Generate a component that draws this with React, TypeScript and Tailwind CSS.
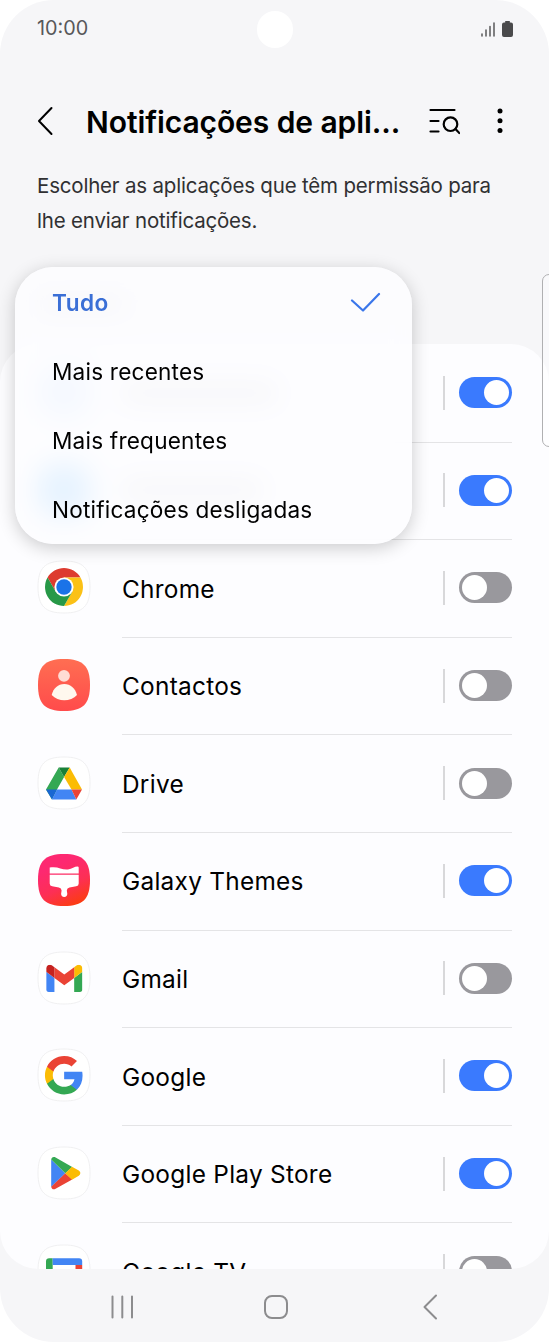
import type { ReactNode } from 'react';

const SQUIRCLE = 'M26 0C45 0 52 7 52 26S45 52 26 52 0 45 0 26 7 0 26 0Z';

function IconBase({ children, fill = '#fff', stroke = '#ececee' }: { children: ReactNode; fill?: string; stroke?: string }) {
  return (
    <svg viewBox="0 0 52 52" className="size-[52px] shrink-0 overflow-visible">
      <path d={SQUIRCLE} fill={fill} stroke={stroke} strokeWidth="0.8" />
      {children}
    </svg>
  );
}

const ChromeIcon = () => (
  <IconBase>
    <path d="M9.55 16.5A19 19 0 0 1 42.45 16.5H26L17.77 30.75Z" fill="#dd3b2f" />
    <path d="M42.45 16.5A19 19 0 0 1 26 45L34.23 30.75L26 16.5Z" fill="#fbc116" />
    <path d="M26 45A19 19 0 0 1 9.55 16.5L17.77 30.75H34.23Z" fill="#279847" />
    <circle cx="26" cy="26" r="9.6" fill="#fff" />
    <circle cx="26" cy="26" r="7.7" fill="#1a73e8" />
  </IconBase>
);

const ContactsIcon = () => (
  <IconBase fill="url(#contacts)" stroke="none">
    <defs>
      <linearGradient id="contacts" x1="0" y1="0" x2="0" y2="1">
        <stop offset="0" stopColor="#ff6e52" />
        <stop offset="1" stopColor="#ff4b4b" />
      </linearGradient>
    </defs>
    <circle cx="26" cy="16.8" r="5.9" fill="#ffdcd4" />
    <path d="M13.7 36C15.5 29 20 25 26.3 25S37 29 39 36C36 39.5 31 41.3 26.3 41.3S17 39.5 13.7 36Z" fill="#fff8ee" />
  </IconBase>
);

const DriveIcon = () => (
  <IconBase>
    <path d="M20.7 10.5L26.1 20L19 32.5L14 42.5L8 32.5Z" fill="#34a853" />
    <path d="M20.7 10.5H31.7L26.1 20Z" fill="#188038" />
    <path d="M31.7 10.5L44 32.5H33.5L26.1 20Z" fill="#fbbc04" />
    <path d="M8 32.5H19L14 42.5Z" fill="#1967d2" />
    <path d="M19 32.5H33.5L38.3 42.5H14Z" fill="#4285f4" />
    <path d="M33.5 32.5H44L38.3 42.5Z" fill="#ea4335" />
  </IconBase>
);

const ThemesIcon = () => (
  <IconBase fill="url(#themes)" stroke="none">
    <defs>
      <linearGradient id="themes" x1="0.3" y1="0" x2="0.75" y2="1">
        <stop offset="0.2" stopColor="#fd2871" />
        <stop offset="0.6" stopColor="#fd2f55" />
        <stop offset="1" stopColor="#fb3d0c" />
      </linearGradient>
    </defs>
    <path d="M11.7 13.6C20 12 24 16.2 30 15.4C34 14.9 36.5 12.6 39.5 12.6Q40.7 12.6 40.7 13.6V19.4H11.7Z" fill="#fff" />
    <path d="M11.7 20.7H40.7V29.5Q40.7 32 38.2 32.2L31.5 33.4Q29 34 28.8 36.5L29.3 39.8A3.1 3.1 0 0 1 23.1 39.8L23.6 36.5Q23.4 34 20.9 33.4L14.2 32.2Q11.7 32 11.7 29.5Z" fill="#fff" />
  </IconBase>
);

const GmailIcon = () => (
  <IconBase>
    <svg x="8.2" y="12.7" width="36.2" height="27.2" viewBox="52 42 88 66">
      <path fill="#4285f4" d="M58 108h14V74L52 59v43c0 3.32 2.69 6 6 6" />
      <path fill="#34a853" d="M120 108h14c3.32 0 6-2.69 6-6V59l-20 15" />
      <path fill="#fbbc04" d="M120 48v26l20-15v-8c0-7.42-8.47-11.65-14.4-7.2" />
      <path fill="#ea4335" d="M72 74V48l24 18 24-18v26L96 92" />
      <path fill="#c5221f" d="M52 51v8l20 15V48l-5.6-4.2c-5.94-4.45-14.4-.22-14.4 7.2" />
    </svg>
  </IconBase>
);

const GoogleIcon = () => (
  <IconBase>
    <g transform="translate(5.2 5.3) scale(1.745)">
      <path fill="#4285f4" d="M22.56 12.25c0-.78-.07-1.53-.2-2.25H12v4.26h5.92c-.26 1.37-1.04 2.53-2.21 3.31v2.77h3.57c2.08-1.92 3.28-4.74 3.28-8.09z" />
      <path fill="#34a853" d="M12 23c2.97 0 5.46-.98 7.28-2.66l-3.57-2.77c-.98.66-2.23 1.06-3.71 1.06-2.86 0-5.29-1.93-6.16-4.53H2.18v2.84C3.99 20.53 7.7 23 12 23z" />
      <path fill="#fbbc05" d="M5.84 14.09c-.22-.66-.35-1.36-.35-2.09s.13-1.43.35-2.09V7.07H2.18C1.43 8.55 1 10.22 1 12s.43 3.45 1.18 4.93l3.66-2.84z" />
      <path fill="#ea4335" d="M12 5.38c1.62 0 3.06.56 4.21 1.64l3.15-3.15C17.45 2.09 14.97 1 12 1 7.7 1 3.99 3.47 2.18 7.07l3.66 2.84c.87-2.6 3.3-4.53 6.16-4.53z" />
    </g>
  </IconBase>
);

const PlayIcon = () => (
  <IconBase>
    <path d="M13.2 12.5V40L27.3 26.3Z" fill="#4285f4" />
    <path d="M13.2 13.2C13.2 10.4 15.5 9.4 17.6 10.6L34.2 19.9L27.3 26.3L13.2 12.6Z" fill="#34a853" />
    <path d="M13.2 39.2C13.2 42 15.5 43 17.6 41.8L34.2 32.6L27.3 26.3L13.2 39.8Z" fill="#ea4335" />
    <path d="M34 19.8L40.8 23.6C42.9 24.8 42.9 27.6 40.8 28.8L34 32.7L27.3 26.3Z" fill="#fbbc04" />
  </IconBase>
);

const GoogleTvIcon = () => (
  <IconBase>
    <path d="M14.7 13.3V38H8V16.5Q8 13.3 11.2 13.3Z" fill="#34a853" />
    <path d="M14.7 13.3H41Q44.2 13.3 44.2 16.5V20H14.7Z" fill="#4285f4" />
    <path d="M37.5 20H44.2V38H37.5Z" fill="#ea4335" />
  </IconBase>
);

type App = { name?: string; icon: ReactNode; width?: string; on: boolean };

const apps: App[] = [
  { icon: <div className="size-[52px] shrink-0 rounded-[18px] bg-[#c8dfff]" />, width: 'w-[155px]', on: true },
  { icon: <div className="size-[52px] shrink-0 rounded-[18px] bg-[#64b8ff]" />, width: 'w-[140px]', on: true },
  { name: 'Chrome', icon: <ChromeIcon />, on: false },
  { name: 'Contactos', icon: <ContactsIcon />, on: false },
  { name: 'Drive', icon: <DriveIcon />, on: false },
  { name: 'Galaxy Themes', icon: <ThemesIcon />, on: true },
  { name: 'Gmail', icon: <GmailIcon />, on: false },
  { name: 'Google', icon: <GoogleIcon />, on: true },
  { name: 'Google Play Store', icon: <PlayIcon />, on: true },
  { name: 'Google TV', icon: <GoogleTvIcon />, on: false },
];

const filters = ['Tudo', 'Mais recentes', 'Mais frequentes', 'Notificações desligadas'];

function Toggle({ on }: { on: boolean }) {
  return (
    <div className={`flex h-[31px] w-[53.5px] items-center rounded-full px-[3px] ${on ? 'justify-end bg-[#3a7afe]' : 'justify-start bg-[#99989d]'}`}>
      <div className="size-[25px] rounded-full bg-white" />
    </div>
  );
}

function AppRow({ app }: { app: App }) {
  return (
    <div className="flex h-[97.6px] shrink-0 pl-[38px] pr-[37px]">
      <div className="flex w-[84px] shrink-0 items-center pb-px">{app.icon}</div>
      <div className="-mb-px flex flex-1 items-center border-b-[1.5px] border-[#e4e4e6]">
        {app.name ? (
          <span className="flex-1 whitespace-nowrap pt-0.5 text-[24.4px] tracking-[0.27px] text-black">{app.name}</span>
        ) : (
          <div className="flex-1">
            <div className={`h-4 rounded bg-[#c4c4c6] ${app.width}`} />
          </div>
        )}
        <div className="mr-3.5 h-[34px] w-[1.5px] bg-[#d8d8da]" />
        <Toggle on={app.on} />
      </div>
    </div>
  );
}

function FilterMenu() {
  return (
    <div className="absolute left-[15px] top-[267px] h-[277px] w-[397px] rounded-[38px] bg-[#fdfdff]/85 shadow-[0_4px_18px_rgba(0,0,0,0.2)] backdrop-blur-[14px]">
      {filters.map((label, i) => (
        <div key={label} className="flex h-[69.2px] items-center justify-between pl-[37px] pr-[31px] pt-0.5">
          <span className={`text-[22.6px] ${i === 0 ? 'font-semibold tracking-[0.4px] text-[#3b6fd6]' : 'tracking-[0.2px] text-black'}`}>{label}</span>
          {i === 0 && (
            <svg viewBox="0 0 31 20" className="mb-0.5 h-5 w-[31px]" fill="none" stroke="#3a76ea" strokeWidth="2.2" strokeLinecap="round" strokeLinejoin="round">
              <path d="M2 8.5L13 18.5L29 2" />
            </svg>
          )}
        </div>
      ))}
    </div>
  );
}

export default function App() {
  return (
    <div className="h-[1342px] w-[549px] bg-white font-['Inter',sans-serif]">
      <div className="relative flex h-full flex-col overflow-hidden rounded-[54px] bg-[#f6f6f8]">
        {/* Status bar */}
        <div className="flex h-[58px] shrink-0 items-center pl-[37px] pr-9">
          <span className="w-[220px] text-[19.8px] text-[#58585a]">10:00</span>
          <div className="h-[37px] w-[36px] rounded-full bg-white" />
          <div className="flex w-[220px] items-center justify-end gap-[7px]">
            <svg viewBox="0 0 14 15" className="h-[15px] w-[14px]" fill="none" stroke="#58585a" strokeWidth="1.5" strokeLinecap="round">
              <path d="M1 12V14M5 8V14M9 4.5V14M13 1V14" />
            </svg>
            <svg viewBox="0 0 11 16" className="h-4 w-[11px]" fill="#4a4a4c">
              <path d="M3.2 0H7.8V1.5H9Q11 1.5 11 3.5V14Q11 16 9 16H2Q0 16 0 14V3.5Q0 1.5 2 1.5H3.2Z" />
            </svg>
          </div>
        </div>

        {/* Header */}
        <header className="mt-[29px] flex h-[68px] shrink-0 items-center pl-[37px]">
          <svg viewBox="0 0 18 30" className="h-[30px] w-[18px]" fill="none" stroke="#000" strokeWidth="2" strokeLinecap="round" strokeLinejoin="round">
            <path d="M14.5 2L2 15L14.5 28" />
          </svg>
          <h1 className="ml-[31px] w-[343px] whitespace-nowrap pt-0.5 text-[30px] font-semibold tracking-[-0.08px] text-black">Notificações de apli...</h1>
          <svg viewBox="0 0 31 27" className="h-[27px] w-[31px]" fill="none" stroke="#000" strokeWidth="2.2" strokeLinecap="round">
            <path d="M1.5 2H25.5M1.5 13H9.5M1.5 23.5H9.5" />
            <circle cx="21.5" cy="16.2" r="6.8" />
            <path d="M26.5 21L30.3 25" />
          </svg>
          <svg viewBox="0 0 6 26" className="ml-[36.5px] h-[26px] w-1.5">
            <circle cx="3" cy="3" r="2.5" />
            <circle cx="3" cy="12.7" r="2.5" />
            <circle cx="3" cy="22.4" r="2.5" />
          </svg>
        </header>

        <p className="mt-[14px] h-[98px] shrink-0 whitespace-nowrap pl-[37px] text-[20.5px] leading-[34.5px] tracking-[-0.19px] text-[#303032]">
          Escolher as aplicações que têm permissão para
          <br />
          lhe enviar notificações.
        </p>

        <div className="flex h-[77px] shrink-0 items-center pb-1 pl-[37px]">
          <div className="h-4 w-[90px] rounded bg-[#d4d4d6]" />
        </div>

        {/* App list */}
        <main className="flex h-[925px] shrink-0 flex-col overflow-hidden rounded-[38px] bg-[#fdfdff]">
          {apps.map((app, i) => (
            <AppRow key={i} app={app} />
          ))}
        </main>

        {/* Navigation bar */}
        <nav className="flex h-[73px] shrink-0 items-center pl-[110px] pt-0.5">
          <svg viewBox="0 0 24 24" className="size-6" fill="none" stroke="#8c8c8e" strokeWidth="2" strokeLinecap="round">
            <path d="M2.5 1.5V22.5M12.3 1.5V22.5M22 1.5V22.5" />
          </svg>
          <div className="ml-[130px] size-6 rounded-[8px] border-2 border-[#8c8c8e]" />
          <svg viewBox="0 0 16 26" className="ml-[134px] h-[26px] w-4" fill="none" stroke="#8c8c8e" strokeWidth="2" strokeLinecap="round" strokeLinejoin="round">
            <path d="M14 1.5L2.5 13L14 24.5" />
          </svg>
        </nav>

        <FilterMenu />

        {/* Edge panel handle */}
        <div className="absolute -right-2 top-[273.5px] h-[173px] w-[15px] rounded-[7px] border-[1.5px] border-[#b0b0b2] bg-white/40" />
      </div>
    </div>
  );
}
